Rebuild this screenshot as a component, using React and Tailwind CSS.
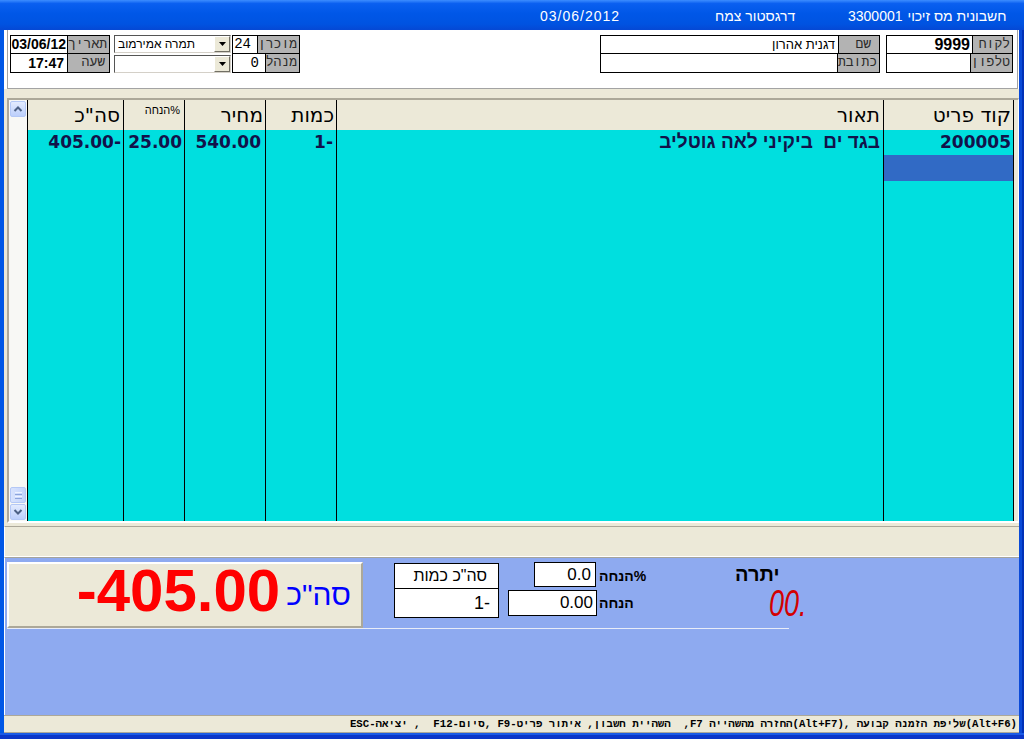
import React from 'react';

const sans = "font-['Liberation_Sans',Arial,sans-serif]";
const dv = "font-['DejaVu_Sans',Verdana,sans-serif]";
const mono = "font-['Liberation_Mono','Courier_New',monospace]";

// two-row field block: white value cell on the left, gray caption on the right
const Group = ({ w, valueW, rows }) => (
    <div className={`flex flex-col border border-black bg-white ${w}`}>
        {rows.map((r, i) => (
            <div key={i} className={`flex h-[18px] ${i === 0 ? 'border-b border-black' : ''}`}>
                <div className={`${valueW} h-full border-r border-black flex items-center justify-end pr-[2px] text-black whitespace-nowrap ${r.cls || ''}`}>
                    {r.value}
                </div>
                <div className={`flex-1 h-full bg-[#b3b3b3] flex items-center justify-end text-[13px] text-[#2a2a2a] whitespace-nowrap ${mono} ${r.lpad || 'pr-[2px]'}`}>
                    {r.label}
                </div>
            </div>
        ))}
    </div>
);

const Combo = ({ text }) => (
    <div className="h-[18px] flex bg-white border border-[#555] border-r-[#d4d0c8] border-b-[#d4d0c8]">
        <div className="flex-1 flex items-center pl-[3px] text-[12px] text-black">{text}</div>
        <div className="w-[16px] h-full bg-[#ece9d8] border border-t-white border-l-white border-r-[#716f64] border-b-[#716f64] flex items-center justify-center">
            <svg width="7" height="4" viewBox="0 0 7 4"><polygon points="0,0 7,0 3.5,4" fill="#000" /></svg>
        </div>
    </div>
);

const ScrollBtn = ({ down }) => (
    <div className="h-[16px] w-[16px] rounded-[2px] border border-[#b4c8f6] bg-[linear-gradient(to_bottom,#e3ebfe,#bccffb)] flex items-center justify-center">
        <svg width="10" height="8" viewBox="0 0 10 8">
            <polyline points={down ? '1.5,2 5,5.5 8.5,2' : '1.5,6 5,2.5 8.5,6'} fill="none" stroke="#4d6185" strokeWidth="2" />
        </svg>
    </div>
);

// percent sign sits to the right of the word, as in the RTL form
const Pct = ({ cls }) => (
    <span className={`flex ${cls}`}>
        <span>הנחה</span>
        <span>%</span>
    </span>
);

const cols = [
    { w: 'w-[96px]', head: 'סה"כ', hpr: 'pr-[3px]', val: '405.00-', vpr: 'pr-[2px]' },
    { w: 'w-[61px]', head: null, small: true, hpr: 'pr-[4px]', val: '25.00', vpr: 'pr-[2px]' },
    { w: 'w-[81px]', head: 'מחיר', hpr: 'pr-[2px]', val: '540.00', vpr: 'pr-[4px]' },
    { w: 'w-[71px]', head: 'כמות', hpr: 'pr-[2px]', val: '1-', vpr: 'pr-[3px]' },
    { w: 'w-[547px]', head: 'תאור', hpr: 'pr-[3px]', val: 'בגד ים  ביקיני לאה גוטליב', vpr: 'pr-[3px]', rtl: true },
    { w: 'w-[131px] border-r', head: 'קוד פריט', hpr: 'pr-[2px]', val: '200005', vpr: 'pr-[2px]', sel: true },
];

const status = [
    ['ESC-'], ['יציאה', 1], [' ,  F12-'], ['סיום', 1], [', F9-'], ['איתור פריט', 1], [' ,'],
    ['השהיית חשבון', 1], ['  ,F7 '], ['החזרה מהשהייה', 1], ['(Alt+F7), '], ['שליפת הזמנה קבועה', 1], ['(Alt+F6)'],
];

export default function App() {
    return (
        <div className={`w-[1024px] h-[739px] flex flex-col overflow-hidden bg-[#0054e3] ${sans}`}>
            {/* Title bar */}
            <div className="h-[30px] shrink-0 flex items-center pl-[540px] pt-[2px] text-white text-[14px] bg-[linear-gradient(to_bottom,#3d8dff_0%,#0a5ff0_12%,#0057e7_45%,#0053e1_80%,#0548d4_100%)]">
                <span className="w-[175px] tracking-[1px]">03/06/2012</span>
                <span className="w-[133px]">
                    <span dir="rtl">דרגסטור צמח</span>
                </span>
                <span>3300001</span>
                <span className="ml-[5px]" dir="rtl">חשבונית מס זיכוי</span>
            </div>

            <div className="flex flex-1 min-h-0">
                <div className="w-[4px] bg-[#0057e6]" />
                <div className="w-[1015px] flex flex-col">
                    {/* Header form */}
                    <div className="h-[59px] shrink-0 bg-white pl-[3px] pr-[1px]">
                        <div className="h-full border-l border-r border-b border-[#a3a3a3] flex items-start pt-[5px]">
                            <div className="ml-[2px]">
                                <Group w="w-[100px]" valueW="w-[57px]" rows={[
                                    { value: '03/06/12', label: 'תאריך', cls: 'text-[14px] font-bold pr-px' },
                                    { value: '17:47', label: 'שעה', cls: 'text-[14px] font-bold pr-[3px]', lpad: 'pr-[4px]' },
                                ]} />
                            </div>
                            <div className="ml-[4px] w-[117px] flex flex-col gap-[2px]">
                                <Combo text="תמרה אמירמוב" />
                                <Combo />
                            </div>
                            <div className="ml-px">
                                <Group w="w-[68px]" valueW="w-[34px]" rows={[
                                    { value: '24', label: 'מוכרן', cls: `text-[14px] pr-[6px] ${mono}` },
                                    { value: '0', label: 'מנהל', cls: `text-[14px] pr-[6px] ${mono}` },
                                ]} />
                            </div>
                            <div className="ml-auto">
                                <Group w="w-[280px]" valueW="w-[238px]" rows={[
                                    { value: 'דגנית אהרון', label: 'שם', cls: 'text-[13px] pr-[3px]', lpad: 'pr-[8px]' },
                                    { value: '', label: 'כתובת' },
                                ]} />
                            </div>
                            <div className="ml-[6px] mr-[4px]">
                                <Group w="w-[127px]" valueW="w-[86px]" rows={[
                                    { value: '9999', label: 'לקוח', cls: 'text-[16px] font-bold pr-[2px]' },
                                    { value: '', label: 'טלפון' },
                                ]} />
                            </div>
                        </div>
                    </div>

                    {/* Items grid */}
                    <div className="h-[437px] shrink-0 bg-[#ece9d8] pl-[3px] pt-[9px]">
                        <div className="w-[1012px] h-[425px] flex border-t-2 border-l-2 border-r border-b-2 border-[#aca899] border-r-white border-b-white">
                            <div className="w-[18px] h-full bg-[#f8f8f5] flex flex-col pl-px pt-px pb-px">
                                <ScrollBtn />
                                <div className="flex-1" />
                                <div className="h-[16px] w-[16px] rounded-[2px] border border-[#b4c8f6] bg-[linear-gradient(to_right,#d8e3fd,#c2d3fb)] flex flex-col items-center justify-center gap-px">
                                    <div className="w-[7px] h-px bg-[#eef3ff]" />
                                    <div className="w-[7px] h-px bg-[#8ca4dc]" />
                                    <div className="w-[7px] h-px bg-[#eef3ff]" />
                                    <div className="w-[7px] h-px bg-[#8ca4dc]" />
                                </div>
                                <div className="mt-px">
                                    <ScrollBtn down />
                                </div>
                            </div>
                            {cols.map((c, i) => (
                                <div key={i} className={`${c.w} h-full flex flex-col border-l border-black`}>
                                    <div className={`h-[30px] bg-[#ece9d8] flex justify-end text-black ${c.hpr} ${c.small ? `items-start pt-[2px] text-[11px] ${sans}` : `items-center text-[20px] ${dv}`}`}>
                                        {c.small ? <Pct /> : <span dir="rtl">{c.head}</span>}
                                    </div>
                                    <div className={`h-[25px] bg-[#00dfdf] flex items-center justify-end font-bold text-[#12124a] whitespace-pre ${c.vpr} ${c.rtl ? `text-[19px] ${sans}` : `text-[17px] ${dv}`}`}>
                                        <span dir={c.rtl ? 'rtl' : 'ltr'}>{c.val}</span>
                                    </div>
                                    <div className={`h-[26px] ${c.sel ? 'bg-[#316ac5]' : 'bg-[#00dfdf]'}`} />
                                    <div className="flex-1 bg-[#00dfdf]" />
                                </div>
                            ))}
                            <div className="flex-1 bg-[#ece9d8]" />
                        </div>
                    </div>

                    {/* Empty groove bar */}
                    <div className="h-[31px] shrink-0 bg-[#ece9d8] border-t border-[#aca899] border-b border-b-white border-l border-l-white" />

                    {/* Totals panel */}
                    <div className="h-[158px] shrink-0 bg-[#8eaaf0] border-t border-[#a5a49c] border-l border-l-white pl-[2px] pt-[4px]">
                        <div className="flex items-start">
                            <div className="w-[356px] h-[66px] bg-[#ece9d8] border-2 border-t-white border-l-white border-r-[#aca899] border-b-[#aca899] flex items-start justify-end pr-[10px]">
                                <span className="text-[60px] leading-[60px] font-bold text-[#ff0000] mt-[-3px]">-405.00</span>
                                <span className="ml-[6px] mt-[16px] text-[30px] leading-[30px] text-[#0000ff]" dir="rtl">סה"כ</span>
                            </div>

                            <div className="ml-[31px] mt-px w-[105px] h-[55px] bg-white border border-black flex flex-col">
                                <div className="h-[25px] border-b border-black flex items-center justify-end pr-[11px] text-[16px] text-black">
                                    <span dir="rtl">סה"כ כמות</span>
                                </div>
                                <div className="flex-1 flex items-center justify-end pr-[8px] text-[18px] text-black">1-</div>
                            </div>

                            <div className="ml-[9px] w-[142px] flex flex-col">
                                <div className="flex items-center">
                                    <div className="ml-[26px] w-[62px] h-[25px] bg-white border border-black flex items-center justify-end pr-[4px] text-[17px] text-black">0.0</div>
                                    <Pct cls="ml-[3px] mt-[3px] text-[14px] font-bold text-black" />
                                </div>
                                <div className="flex items-center mt-[3px]">
                                    <div className="w-[89px] h-[26px] bg-white border border-black flex items-center justify-end pr-[3px] text-[17px] text-black">0.00</div>
                                    <span className="ml-[2px] text-[14px] font-bold text-black">הנחה</span>
                                </div>
                            </div>

                            <div className="ml-[85px] flex flex-col">
                                <span className="text-[20px] leading-[24px] font-bold text-black">יתרה</span>
                                <span className="ml-[34px] text-[36px] leading-[36px] italic text-[#d40000] inline-block origin-left scale-x-75">00.</span>
                            </div>
                        </div>
                        <div className="w-[782px] h-px bg-[#e8ecf8]" />
                    </div>

                    {/* Status bar */}
                    <div className={`h-[18px] shrink-0 bg-[#ece9d8] border-t border-b border-[#aca899] flex items-center justify-end pr-[2px] text-[10.7px] font-bold text-black whitespace-pre ${mono}`}>
                        {status.map(([t, r], i) => (
                            <span key={i} dir={r ? 'rtl' : 'ltr'}>{t}</span>
                        ))}
                    </div>
                </div>
                <div className="w-[5px] bg-[#0a4ad8] border-r-2 border-[#0031b8]" />
            </div>
            <div className="h-[6px] shrink-0 bg-[#0b36c8] border-t-2 border-[#1a5ae6]" />
        </div>
    );
}
